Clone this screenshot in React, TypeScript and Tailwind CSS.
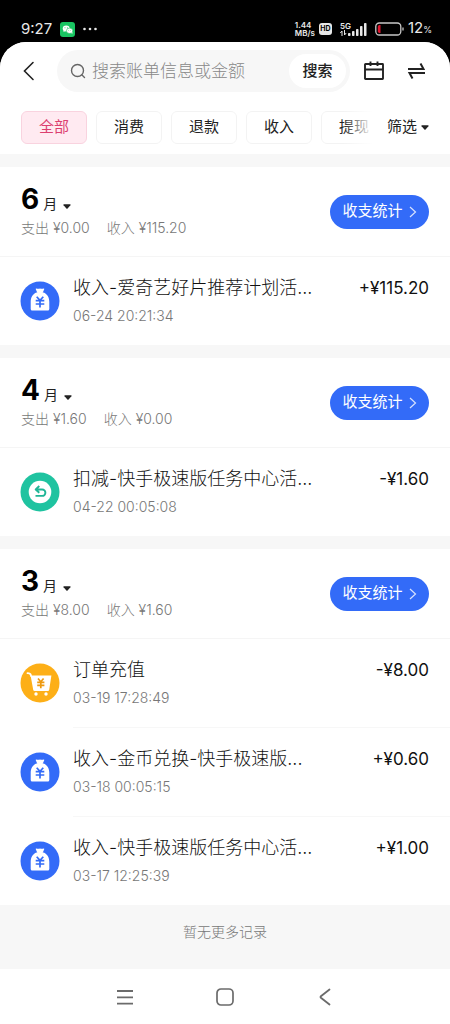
import React, { useState } from "react";

type BillKind = "income" | "refund" | "order";

interface Bill {
  kind: BillKind;
  title: string;
  time: string;
  amount: string;
}

interface MonthGroup {
  month: number;
  expense: string;
  income: string;
  bills: Bill[];
}

const tabs = ["全部", "消费", "退款", "收入", "提现"];

const groups: MonthGroup[] = [
  {
    month: 6,
    expense: "0.00",
    income: "115.20",
    bills: [
      {
        kind: "income",
        title: "收入-爱奇艺好片推荐计划活...",
        time: "06-24 20:21:34",
        amount: "+¥115.20",
      },
    ],
  },
  {
    month: 4,
    expense: "1.60",
    income: "0.00",
    bills: [
      {
        kind: "refund",
        title: "扣减-快手极速版任务中心活...",
        time: "04-22 00:05:08",
        amount: "-¥1.60",
      },
    ],
  },
  {
    month: 3,
    expense: "8.00",
    income: "1.60",
    bills: [
      {
        kind: "order",
        title: "订单充值",
        time: "03-19 17:28:49",
        amount: "-¥8.00",
      },
      {
        kind: "income",
        title: "收入-金币兑换-快手极速版...",
        time: "03-18 00:05:15",
        amount: "+¥0.60",
      },
      {
        kind: "income",
        title: "收入-快手极速版任务中心活...",
        time: "03-17 12:25:39",
        amount: "+¥1.00",
      },
    ],
  },
];

function BillIcon({ kind }: { kind: BillKind }) {
  if (kind === "refund") {
    return (
      <svg className="size-10 shrink-0" viewBox="0 0 40 40" fill="none">
        <circle cx="20" cy="20" r="19.5" fill="#1fc3a0" />
        <circle cx="20" cy="20" r="11.3" fill="#fff" />
        <path
          d="M16 17.500h6.200a3.200 3.200 0 0 1 0 6.400H15.500M19.300 14l-3.600 3.500 3.600 3.200"
          stroke="#1fb596"
          strokeWidth="1.9"
          strokeLinejoin="round"
        />
      </svg>
    );
  }
  if (kind === "order") {
    return (
      <svg className="size-10 shrink-0" viewBox="0 0 40 40" fill="none">
        <circle cx="20" cy="20" r="19.5" fill="#fdaf17" />
        <path
          d="M7.5 10.2c2 0 3 .3 3.4 2l.3 1"
          stroke="#fff"
          strokeWidth="1.8"
          strokeLinecap="round"
        />
        <path d="M10.6 12.6h20.8l-2.2 14.2q-.2 1.2-1.4 1.2H14.6q-1.2 0-1.4-1.2z" fill="#fff" />
        <circle cx="16" cy="31" r="1.7" fill="#fff" />
        <circle cx="26" cy="31" r="1.7" fill="#fff" />
        <path
          d="m18 15.5 2.8 3.3 2.8-3.3M20.8 18.8v6.4M17.2 19.3h7.2M17.2 22.3h7.2"
          stroke="#ee9a10"
          strokeWidth="1.7"
        />
      </svg>
    );
  }
  return (
    <svg className="size-10 shrink-0" viewBox="0 0 40 40" fill="none">
      <circle cx="20" cy="20" r="19.5" fill="#336bf8" />
      <path
        d="M16.300 7.400q1.900.8 3.700 0 1.900.8 3.700 0 .9 0 .5.9L22.600 12h-5.200L15.800 8.300q-.4-.9.500-.9z"
        fill="#fff"
      />
      <path
        d="M16.500 11.500h7c3.800 1.300 5.800 5 5.800 9.300v7.200q0 1.500-1.500 1.500H12.200q-1.500 0-1.500-1.500v-7.200c0-4.300 2-8 5.800-9.300z"
        fill="#fff"
      />
      <path
        d="m16.700 15.700 3.300 3.600 3.300-3.600M20 19.300v7.200M15.700 19.700h8.600M15.700 23h8.600"
        stroke="#336bf8"
        strokeWidth="1.700"
      />
    </svg>
  );
}

function Caret() {
  return (
    <svg className="h-[5px] w-2" viewBox="0 0 8 5" fill="currentColor">
      <path d="M1 .2h6q1 .2.4 1L4.600 4.500q-.6.5-1.200 0L.6 1.200Q0 .4 1 .2z" />
    </svg>
  );
}

function StatusBar() {
  return (
    <div className="flex h-[42px] items-end justify-between pr-[18px] pl-[21px] pb-[3px] text-[#e8e8e8]">
      <div className="flex h-5 items-center gap-2">
        <span className="text-[15px] leading-5">9:27</span>
        <svg className="size-[15px]" viewBox="0 0 15 15">
          <rect width="15" height="15" rx="3" fill="#19c562" />
          <ellipse cx="6.200" cy="6.400" rx="3.500" ry="3" fill="#fff" />
          <path d="m3.800 8-.4 2 2-1z" fill="#fff" />
          <ellipse cx="9.600" cy="8.800" rx="3.200" ry="2.700" fill="#fff" stroke="#19c562" strokeWidth=".6" />
          <path d="m11 10.800 1.300 1.200v-2z" fill="#fff" />
          <g fill="#19c562">
            <circle cx="5" cy="5.700" r=".5" />
            <circle cx="7.400" cy="5.700" r=".5" />
            <circle cx="8.600" cy="8.300" r=".4" />
            <circle cx="10.600" cy="8.300" r=".4" />
          </g>
        </svg>
        <svg className="h-1 w-[14px]" viewBox="0 0 14 4" fill="currentColor">
          <circle cx="1.500" cy="2" r="1.300" />
          <circle cx="7" cy="2" r="1.300" />
          <circle cx="12.500" cy="2" r="1.300" />
        </svg>
      </div>
      <div className="flex h-5 items-center gap-1">
        <div className="text-[8px] leading-[8px] font-semibold">
          <div>1.44</div>
          <div>MB/s</div>
        </div>
        <span className="flex h-3 w-[13px] items-center justify-center rounded-[3px] bg-[#e8e8e8] text-[7px] font-bold text-black">
          HD
        </span>
        <div className="ml-1 flex items-end">
          <div className="text-[8px] leading-[8px] font-semibold">
            <div>5G</div>
            <svg className="h-[6px] w-[7px]" viewBox="0 0 7 6" stroke="currentColor" fill="none">
              <path d="M2 6V1L.3 3M4.500 0v5l1.700-2" />
            </svg>
          </div>
          <svg className="-ml-1 h-[13px] w-5" viewBox="0 0 20 13" fill="currentColor">
            <rect x="1" y="10" width="2.500" height="3" rx=".8" />
            <rect x="5" y="8" width="2.500" height="5" rx=".8" />
            <rect x="9" y="6" width="2.500" height="7" rx=".8" />
            <rect x="13" y="3" width="2.500" height="10" rx=".8" />
            <rect x="17" y="0" width="2.500" height="13" rx=".8" />
          </svg>
        </div>
        <svg className="ml-1 h-[14px] w-[29px]" viewBox="0 0 29 14" fill="none">
          <rect x=".8" y="1" width="25" height="12" rx="3.500" stroke="#c8c8c8" strokeWidth="1.300" />
          <path d="M5.500 3v8H4.500q-1.700 0-1.700-1.700V4.700Q2.800 3 4.500 3z" fill="#e0132c" />
          <path d="M28 5.500v3" stroke="#c8c8c8" strokeWidth="1.300" />
        </svg>
        <span className="text-[15px] leading-5">
          12<span className="text-[9px]">%</span>
        </span>
      </div>
    </div>
  );
}

export default function App() {
  const [activeTab, setActiveTab] = useState("全部");

  return (
    <div className="min-h-screen bg-black font-[Inter,'Noto_Sans_CJK_SC',sans-serif]">
      <StatusBar />
      <div className="overflow-hidden rounded-t-[26px] bg-[#f7f7f7]">
        <header className="bg-white pt-2 pb-[10px]">
          <div className="flex items-center pr-6 pl-[21px]">
            <button aria-label="返回" className="w-9 shrink-0">
              <svg className="h-5 w-4" viewBox="0 0 16 20" fill="none">
                <path d="m12 1.500-8.500 8.500 8.500 8.500" stroke="#222" strokeWidth="1.600" strokeLinecap="round" />
              </svg>
            </button>
            <div className="flex h-[42px] min-w-0 flex-1 items-center rounded-full bg-[#f7f7f7] pr-1 pl-[13px]">
              <svg className="size-4 shrink-0" viewBox="0 0 16 16" fill="none" stroke="#666" strokeWidth="1.400">
                <circle cx="7.500" cy="7.500" r="6" />
                <path d="m12 12 2.500 2.500" strokeLinecap="round" />
              </svg>
              <input
                type="text"
                aria-label="搜索账单"
                placeholder="搜索账单信息或金额"
                className="ml-[6px] min-w-0 flex-1 bg-transparent text-[17px] leading-6 font-light outline-none placeholder:text-[#888]"
              />
              <button className="h-[34px] w-[57px] shrink-0 rounded-full bg-white text-[15px] font-medium text-[#222]">
                搜索
              </button>
            </div>
            <button aria-label="选择日期" className="ml-[13px] shrink-0">
              <svg className="size-[22px]" viewBox="0 0 22 22" fill="none" stroke="#222" strokeWidth="1.900">
                <rect x="2" y="4" width="18" height="15" rx=".5" />
                <path d="M2 9.500h18M7.500 1.500V6M14.500 1.500V6" />
              </svg>
            </button>
            <button aria-label="切换账户" className="ml-[22px] shrink-0">
              <svg className="h-5 w-[19px]" viewBox="0 0 19 20" fill="none" stroke="#222" strokeWidth="2">
                <path d="M1 8h15.500L13.500 2.500M18 12H2.500l3 5.500" />
              </svg>
            </button>
          </div>
          <div className="mt-[19px] flex items-center px-[21px]">
            <div className="relative min-w-0 flex-1 overflow-hidden">
              <div className="flex gap-[9px]">
                {tabs.map((tab) => (
                  <button
                    key={tab}
                    onClick={() => setActiveTab(tab)}
                    className={
                      tab === activeTab
                        ? "h-[33px] w-[66px] shrink-0 rounded-md border border-[#f9d3df] bg-[#ffeaf1] text-[15px] text-[#dc3f70]"
                        : "h-[33px] w-[66px] shrink-0 rounded-md border border-[#f3f3f3] bg-white text-[15px] text-[#222]"
                    }
                  >
                    {tab}
                  </button>
                ))}
              </div>
              <div className="pointer-events-none absolute inset-y-0 right-0 w-10 bg-linear-to-r from-white/0 to-white to-75%" />
            </div>
            <button className="ml-1 flex shrink-0 items-center gap-1 text-[15px] text-[#222]">
              筛选
              <Caret />
            </button>
          </div>
        </header>

        <main>
          {groups.map((group) => (
            <section key={group.month} className="mt-[13px] bg-white">
              <div className="flex h-[90px] items-center justify-between border-b border-[#f5f5f5] px-[21px]">
                <div>
                  <h2>
                    <button className="flex items-baseline text-[#222]">
                      <span className="text-[28px] leading-7 font-bold text-black">{group.month}</span>
                      <span className="mr-[6px] ml-1 text-sm leading-7">月</span>
                      <Caret />
                    </button>
                  </h2>
                  <p className="flex gap-[17px] text-sm leading-5 font-light text-[#777]">
                    <span>支出 ¥{group.expense}</span>
                    <span>收入 ¥{group.income}</span>
                  </p>
                </div>
                <button className="flex h-[34px] w-[99px] items-center justify-center gap-[6px] rounded-full bg-[#336bf8] text-[15px] text-white">
                  收支统计
                  <svg className="h-3 w-2" viewBox="0 0 8 12" fill="none">
                    <path d="m1 1 5.500 5L1 11" stroke="#fff" strokeWidth="1.200" strokeOpacity=".8" />
                  </svg>
                </button>
              </div>
              <ul>
                {group.bills.map((bill, i) => (
                  <li key={bill.time} className="flex pl-5">
                    <div className="flex items-center">
                      <BillIcon kind={bill.kind} />
                    </div>
                    <div
                      className={
                        i > 0
                          ? "ml-[13px] flex h-[89px] min-w-0 flex-1 items-center border-t border-[#f7f7f7] pr-[21px]"
                          : "ml-[13px] flex h-[88px] min-w-0 flex-1 items-center pr-[21px]"
                      }
                    >
                      <div className="min-w-0 flex-1">
                        <div className="flex justify-between leading-6 text-[#111]">
                          <span className="truncate text-lg leading-6 font-light">{bill.title}</span>
                          <span className="text-[17px] leading-6">{bill.amount}</span>
                        </div>
                        <p className="mt-[6px] text-sm leading-5 font-light text-[#777]">{bill.time}</p>
                      </div>
                    </div>
                  </li>
                ))}
              </ul>
            </section>
          ))}
        </main>

        <p className="pt-[17px] pb-[27px] text-center text-sm leading-5 font-light text-[#777]">暂无更多记录</p>

        <nav className="flex h-[55px] items-center justify-center gap-20 bg-white">
          <button aria-label="最近任务">
            <svg className="size-5" viewBox="0 0 20 20" stroke="#6b6b6b" strokeWidth="1.800">
              <path d="M2 4h16M2 10.300h16M2 16.600h16" />
            </svg>
          </button>
          <button aria-label="主页">
            <svg className="size-5" viewBox="0 0 20 20" fill="none" stroke="#6b6b6b" strokeWidth="1.700">
              <rect x="2" y="2" width="16" height="16" rx="4" />
            </svg>
          </button>
          <button aria-label="后退">
            <svg className="size-5" viewBox="0 0 20 20" fill="none" stroke="#6b6b6b" strokeWidth="1.800">
              <path d="m14.500 2.500-8.600 6.800q-.8.700 0 1.400l8.600 6.800" strokeLinecap="round" />
            </svg>
          </button>
        </nav>
      </div>
    </div>
  );
}
